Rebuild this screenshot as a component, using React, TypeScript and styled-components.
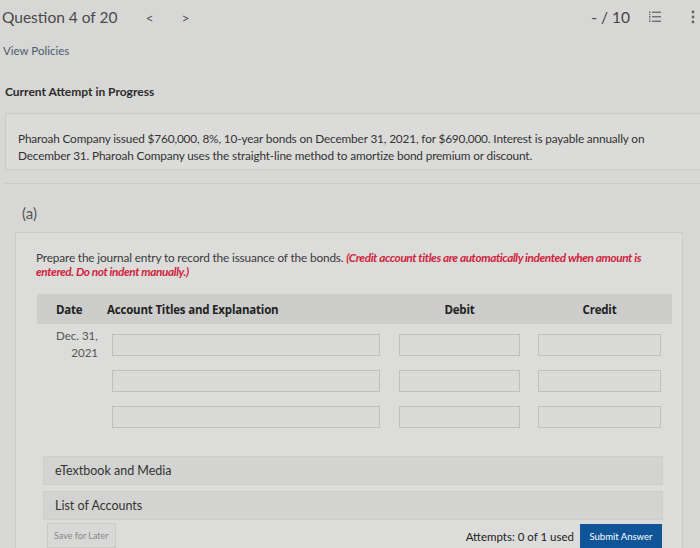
import styled, { createGlobalStyle } from 'styled-components';

const GlobalStyle = createGlobalStyle`
  html, body {
    margin: 0;
    padding: 0;
    background: #d7d7d5;
  }
  body {
    font-family: Lato, 'Open Sans', sans-serif;
    color: #333;
  }
`;

const Page = styled.div`
  width: 700px;
  height: 548px;
  overflow: hidden;
`;

const TopBar = styled.header`
  display: flex;
  align-items: center;
  height: 34px;
  padding-left: 2px;
`;

const Title = styled.div`
  font-size: 15.5px;
  color: #4a4a4a;
`;

const Arrow = styled.span<{ $gap: number }>`
  font-size: 14px;
  color: #555;
  margin-left: ${p => p.$gap}px;
`;

const Spacer = styled.div`
  flex: 1;
`;

const Score = styled.div`
  font-size: 15.5px;
  color: #444;
  margin-right: 18px;
`;

const IconSlot = styled.div<{ $gap: number }>`
  display: flex;
  align-items: center;
  margin-right: ${p => p.$gap}px;
  color: #666;
`;

const PolicyLink = styled.a`
  display: block;
  margin: 10px 0 0 3px;
  font-size: 11.5px;
  color: #4b5b6c;
`;

const AttemptLabel = styled.div`
  margin: 27px 0 0 5px;
  font-size: 12px;
  font-weight: 700;
  color: #2c2c2c;
`;

const QuestionBox = styled.div`
  margin: 14px 0 0 5px;
  border: 1px solid #cacac8;
  border-right: none;
  background: #dbdbd9;
  padding: 16px 12px 5px;
  font-size: 11.8px;
  line-height: 17px;
  color: #333;
  letter-spacing: -0.15px;
`;

const PartHeader = styled.div`
  margin: 13px 0 0 5px;
  border-top: 1px solid #cacac8;
  padding: 20px 0 10px 17px;
  font-size: 15px;
  line-height: 18px;
  color: #555;
`;

const PartBody = styled.div`
  margin: 0 17px 0 15px;
  border: 1px solid #cbcbc9;
  border-bottom: none;
  background: #dcdcda;
  padding: 18px 10px 0 20px;
  height: 320px;
`;

const Prompt = styled.p`
  margin: 0;
  font-size: 11.8px;
  line-height: 14px;
  color: #3a3a3a;
  letter-spacing: -0.15px;
`;

const Warning = styled.span`
  color: #d0233c;
  font-weight: 700;
  font-style: italic;
  letter-spacing: -0.4px;
`;

const Journal = styled.div`
  margin: 15px 0 0 1px;
`;

const Row = styled.div<{ $head?: boolean }>`
  display: grid;
  grid-template-columns: 75px 268px 19px 121px 18px 123px;
  align-items: center;
  height: ${p => (p.$head ? '30px' : '36px')};
  background: ${p => (p.$head ? '#cdcdcb' : 'transparent')};
  margin-bottom: ${p => (p.$head ? '3px' : '0')};
`;

const HeadCell = styled.div<{ $align: 'date' | 'title' | 'center' }>`
  font-family: 'Open Sans', sans-serif;
  font-weight: 700;
  font-size: 11.5px;
  color: #222;
  padding-left: ${p => (p.$align === 'date' ? '19px' : '0')};
  margin-left: ${p => (p.$align === 'title' ? '-5px' : '0')};
  text-align: ${p => (p.$align === 'center' ? 'center' : 'left')};
  letter-spacing: -0.2px;
`;

const DateCell = styled.div`
  padding-left: 19px;
  align-self: start;
  font-size: 11.5px;
  line-height: 17px;
  color: #555;
  display: flex;
  flex-direction: column;
  align-items: flex-start;
  width: 42px;
  span:last-child {
    align-self: flex-end;
  }
`;

const Field = styled.input`
  box-sizing: border-box;
  height: 22px;
  width: 100%;
  border: 1px solid #c0c0be;
  background: #dadad8;
  outline: none;
`;

const Gap = styled.div``;

const Accordion = styled.div<{ $first?: boolean }>`
  margin: ${p => (p.$first ? '21px' : '6px')} 9px 0 7px;
  height: 27px;
  display: flex;
  align-items: center;
  padding-left: 11px;
  background: #d3d3d1;
  border: 1px solid #cdcdcb;
  font-size: 12.5px;
  color: #333;
`;

const Footer = styled.div`
  display: flex;
  align-items: flex-start;
  margin: 3px 10px 0 11px;
`;

const SaveButton = styled.button`
  font-family: Lato, sans-serif;
  font-size: 9px;
  color: #888;
  background: #d8d8d6;
  border: 1px solid #cacac8;
  padding: 0 6px;
  height: 25px;
`;

const Attempts = styled.span`
  margin-left: auto;
  margin-top: 7px;
  font-size: 11.5px;
  color: #222;
`;

const SubmitButton = styled.button`
  margin-left: 6px;
  margin-top: 1px;
  font-family: Lato, sans-serif;
  font-size: 9.5px;
  color: #fff;
  background: #0f5597;
  border: none;
  height: 25px;
  width: 82px;
  padding: 0;
`;

const ListIcon = () => (
  <svg width="14" height="14" viewBox="0 0 14 14" fill="#666">
    <rect x="1" y="1.5" width="1.5" height="1.5" />
    <rect x="1" y="6" width="1.5" height="1.5" />
    <rect x="1" y="10.5" width="1.5" height="1.5" />
    <rect x="1" y="4" width="1.5" height="1" />
    <rect x="1" y="8.5" width="1.5" height="1" />
    <rect x="4" y="1.6" width="9" height="1.3" />
    <rect x="4" y="6.1" width="9" height="1.3" />
    <rect x="4" y="10.6" width="9" height="1.3" />
  </svg>
);

const KebabIcon = () => (
  <svg width="4" height="14" viewBox="0 0 4 14" fill="#666">
    <circle cx="2" cy="2" r="1.4" />
    <circle cx="2" cy="7" r="1.4" />
    <circle cx="2" cy="12" r="1.4" />
  </svg>
);

const rows = [0, 1, 2];

export default function App() {
  return (
    <Page>
      <GlobalStyle />
      <TopBar>
        <Title>Question 4 of 20</Title>
        <Arrow $gap={28}>&lt;</Arrow>
        <Arrow $gap={28}>&gt;</Arrow>
        <Spacer />
        <Score>- / 10</Score>
        <IconSlot $gap={29}>
          <ListIcon />
        </IconSlot>
        <IconSlot $gap={5}>
          <KebabIcon />
        </IconSlot>
      </TopBar>
      <PolicyLink>View Policies</PolicyLink>
      <AttemptLabel>Current Attempt in Progress</AttemptLabel>
      <QuestionBox>
        Pharoah Company issued $760,000, 8%, 10-year bonds on December 31, 2021, for $690,000. Interest is payable annually on
        <br />
        December 31. Pharoah Company uses the straight-line method to amortize bond premium or discount.
      </QuestionBox>
      <PartHeader>(a)</PartHeader>
      <PartBody>
        <Prompt>
          Prepare the journal entry to record the issuance of the bonds.{' '}
          <Warning>
            (Credit account titles are automatically indented when amount is
            <br />
            entered. Do not indent manually.)
          </Warning>
        </Prompt>
        <Journal>
          <Row $head>
            <HeadCell $align="date">Date</HeadCell>
            <HeadCell $align="title">Account Titles and Explanation</HeadCell>
            <Gap />
            <HeadCell $align="center">Debit</HeadCell>
            <Gap />
            <HeadCell $align="center">Credit</HeadCell>
          </Row>
          {rows.map(i => (
            <Row key={i}>
              {i === 0 ? (
                <DateCell>
                  <span>Dec. 31,</span>
                  <span>2021</span>
                </DateCell>
              ) : (
                <Gap />
              )}
              <Field />
              <Gap />
              <Field />
              <Gap />
              <Field />
            </Row>
          ))}
        </Journal>
        <Accordion $first>eTextbook and Media</Accordion>
        <Accordion>List of Accounts</Accordion>
        <Footer>
          <SaveButton>Save for Later</SaveButton>
          <Attempts>Attempts: 0 of 1 used</Attempts>
          <SubmitButton>Submit Answer</SubmitButton>
        </Footer>
      </PartBody>
    </Page>
  );
}
